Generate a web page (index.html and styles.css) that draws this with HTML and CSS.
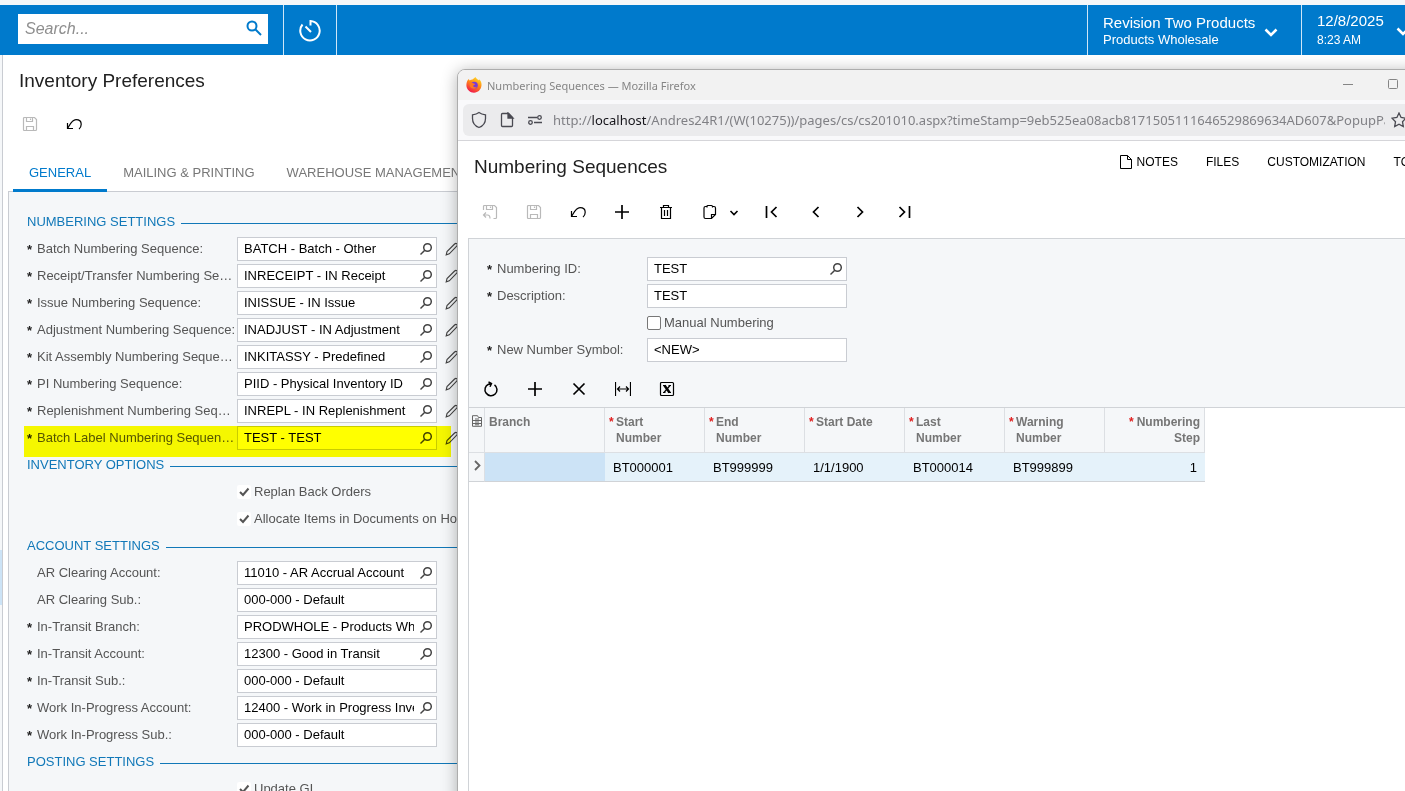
FILE: index.html
```html
<!DOCTYPE html>
<html lang="en">
<head>
    <meta charset="UTF-8">
    <meta name="viewport" content="width=device-width, initial-scale=1.0">
    <title>Inventory Preferences</title>
    <link rel="stylesheet" href="styles.css">
</head>
<body>
    <!-- Shared icons -->
    <svg class="sprite" aria-hidden="true">
        <symbol id="i-lens" viewBox="0 0 14 14"><circle cx="8.5" cy="5.5" r="3.8"/><path d="M5.8 8.2 1.500 12.500"/></symbol>
        <symbol id="i-pencil" viewBox="0 0 14 14"><path d="M1.2 12.8 2 9.6 9.6 2c.8-.8 1.6-.9 2.3-.2s.6 1.5-.2 2.3L4.3 11.8z"/></symbol>
        <symbol id="i-save" viewBox="0 0 16 16"><path d="M2.500 1.500h10l2 2v10q0 1-1 1h-11q-1 0-1-1v-11q0-1 1-1zM4.500 1.500v4h6v-4M8.500 2.500v1.500M4.500 14.500v-4h7v4"/></symbol>
        <symbol id="i-saveback" viewBox="0 0 16 16"><path d="M1.500 6v-3.500q0-1 1-1h10l2 2v10q0 1-1 1h-2M4.500 1.500v4h6v-4M8.500 2.500v1.500M4 8.500 1.500 11 4 13.500M1.500 11h4c1.500 0 2.500 1 2.500 3.500"/></symbol>
        <symbol id="i-undo" viewBox="0 0 16 16"><path d="M1.500 7v5.500H7M1.500 12.500C4 8.500 6 3.700 10 3.700c3.200 0 5.200 2 5.200 4.500 0 2-.8 3.800-2.200 4.800"/></symbol>
        <symbol id="i-plus" viewBox="0 0 16 16"><path d="M8 1v14M1 8h14"/></symbol>
        <symbol id="i-trash" viewBox="0 0 16 16"><path d="M2 3.500h12M5.500 3.500v-2h5v2M3.500 3.500v11h9v-11M6.500 6v6M9.500 6v6"/></symbol>
        <symbol id="i-clip" viewBox="0 0 16 16"><path d="M5 2.500H3.500Q2 2.500 2 4v9q0 1.500 1.500 1.500h6l4-4V4q0-1.500-1.500-1.500h-1.500M5 3.500v-1q0-1 1-1h3.500q1 0 1 1v1M9.500 14.500v-4h4"/></symbol>
        <symbol id="i-down" viewBox="0 0 16 16"><path d="m4.500 7 3.500 3.500L11.500 7"/></symbol>
        <symbol id="i-first" viewBox="0 0 16 16"><path d="M2.500 2v12M12.500 3l-5 5 5 5"/></symbol>
        <symbol id="i-prev" viewBox="0 0 16 16"><path d="m10.500 3-5 5 5 5"/></symbol>
        <symbol id="i-next" viewBox="0 0 16 16"><path d="m5.500 3 5 5-5 5"/></symbol>
        <symbol id="i-last" viewBox="0 0 16 16"><path d="m3.500 3 5 5-5 5M13.500 2v12"/></symbol>
    </svg>

    <header class="topbar">
        <div class="search-box">
            <input type="text" class="search-input" placeholder="Search..." aria-label="Search">
            <button class="search-button" aria-label="Search">
                <svg width="18" height="18" viewBox="0 0 18 18"><circle cx="7" cy="6" r="4.500"/><path d="m10 9 6 6"/></svg>
            </button>
        </div>
        <button class="clock-button" aria-label="Recent">
            <svg width="24" height="24" viewBox="0 0 24 24"><path d="M4.500 6.500A9.700 9.700 0 1 0 12.500 3v4.500M13 14 7.500 8.500"/></svg>
        </button>
        <button class="company">
            <span class="two-lines">
                <span class="line-big">Revision Two Products</span>
                <span class="line-small">Products Wholesale</span>
            </span>
            <svg width="14" height="10" viewBox="0 0 14 10"><path d="m1.500 1.500 5.500 5.500 5.500-5.500"/></svg>
        </button>
        <button class="business-date">
            <span class="two-lines">
                <span class="line-big">12/8/2025</span>
                <span class="line-time">8:23 AM</span>
            </span>
            <svg width="14" height="10" viewBox="0 0 14 10"><path d="m1.500 1.500 5.500 5.500 5.500-5.500"/></svg>
        </button>
    </header>

    <div class="page">
        <nav class="rail"><a href="#" class="rail-active" aria-label="Inventory"></a></nav>
        <main class="content">
            <h1>Inventory Preferences</h1>
            <div class="toolbar">
                <button class="tool disabled" aria-label="Save"><svg><use href="#i-save"/></svg></button>
                <button class="tool" aria-label="Undo"><svg><use href="#i-undo"/></svg></button>
            </div>
            <div class="tabs">
                <button class="tab active">GENERAL</button>
                <button class="tab">MAILING &amp; PRINTING</button>
                <button class="tab">WAREHOUSE MANAGEMENT</button>
            </div>

            <form class="panel">
                <h2>NUMBERING SETTINGS</h2>
                <div class="row required">
                    <label for="batch">Batch Numbering Sequence:</label>
                    <div class="field"><input id="batch" type="text" value="BATCH - Batch - Other"><button type="button" aria-label="Look up"><svg><use href="#i-lens"/></svg></button></div>
                    <button type="button" class="edit" aria-label="Edit"><svg><use href="#i-pencil"/></svg></button>
                </div>
                <div class="row required">
                    <label for="receipt">Receipt/Transfer Numbering Sequence:</label>
                    <div class="field"><input id="receipt" type="text" value="INRECEIPT - IN Receipt"><button type="button" aria-label="Look up"><svg><use href="#i-lens"/></svg></button></div>
                    <button type="button" class="edit" aria-label="Edit"><svg><use href="#i-pencil"/></svg></button>
                </div>
                <div class="row required">
                    <label for="issue">Issue Numbering Sequence:</label>
                    <div class="field"><input id="issue" type="text" value="INISSUE - IN Issue"><button type="button" aria-label="Look up"><svg><use href="#i-lens"/></svg></button></div>
                    <button type="button" class="edit" aria-label="Edit"><svg><use href="#i-pencil"/></svg></button>
                </div>
                <div class="row required">
                    <label for="adjust">Adjustment Numbering Sequence:</label>
                    <div class="field"><input id="adjust" type="text" value="INADJUST - IN Adjustment"><button type="button" aria-label="Look up"><svg><use href="#i-lens"/></svg></button></div>
                    <button type="button" class="edit" aria-label="Edit"><svg><use href="#i-pencil"/></svg></button>
                </div>
                <div class="row required">
                    <label for="kit">Kit Assembly Numbering Sequence:</label>
                    <div class="field"><input id="kit" type="text" value="INKITASSY - Predefined"><button type="button" aria-label="Look up"><svg><use href="#i-lens"/></svg></button></div>
                    <button type="button" class="edit" aria-label="Edit"><svg><use href="#i-pencil"/></svg></button>
                </div>
                <div class="row required">
                    <label for="piid">PI Numbering Sequence:</label>
                    <div class="field"><input id="piid" type="text" value="PIID - Physical Inventory ID"><button type="button" aria-label="Look up"><svg><use href="#i-lens"/></svg></button></div>
                    <button type="button" class="edit" aria-label="Edit"><svg><use href="#i-pencil"/></svg></button>
                </div>
                <div class="row required">
                    <label for="repl">Replenishment Numbering Sequence:</label>
                    <div class="field"><input id="repl" type="text" value="INREPL - IN Replenishment"><button type="button" aria-label="Look up"><svg><use href="#i-lens"/></svg></button></div>
                    <button type="button" class="edit" aria-label="Edit"><svg><use href="#i-pencil"/></svg></button>
                </div>
                <div class="row required marked">
                    <label for="batchlabel">Batch Label Numbering Sequence:</label>
                    <div class="field"><input id="batchlabel" type="text" value="TEST - TEST"><button type="button" aria-label="Look up"><svg><use href="#i-lens"/></svg></button></div>
                    <button type="button" class="edit" aria-label="Edit"><svg><use href="#i-pencil"/></svg></button>
                </div>

                <h2>INVENTORY OPTIONS</h2>
                <div class="row check-row"><label><input type="checkbox" checked>Replan Back Orders</label></div>
                <div class="row check-row"><label><input type="checkbox" checked>Allocate Items in Documents on Hold</label></div>

                <h2>ACCOUNT SETTINGS</h2>
                <div class="row">
                    <label for="aracct">AR Clearing Account:</label>
                    <div class="field"><input id="aracct" type="text" value="11010 - AR Accrual Account"><button type="button" aria-label="Look up"><svg><use href="#i-lens"/></svg></button></div>
                </div>
                <div class="row">
                    <label for="arsub">AR Clearing Sub.:</label>
                    <div class="field"><input id="arsub" type="text" value="000-000 - Default"></div>
                </div>
                <div class="row required">
                    <label for="itbranch">In-Transit Branch:</label>
                    <div class="field"><input id="itbranch" type="text" value="PRODWHOLE - Products Wholesale"><button type="button" aria-label="Look up"><svg><use href="#i-lens"/></svg></button></div>
                </div>
                <div class="row required">
                    <label for="itacct">In-Transit Account:</label>
                    <div class="field"><input id="itacct" type="text" value="12300 - Good in Transit"><button type="button" aria-label="Look up"><svg><use href="#i-lens"/></svg></button></div>
                </div>
                <div class="row required">
                    <label for="itsub">In-Transit Sub.:</label>
                    <div class="field"><input id="itsub" type="text" value="000-000 - Default"></div>
                </div>
                <div class="row required">
                    <label for="wipacct">Work In-Progress Account:</label>
                    <div class="field"><input id="wipacct" type="text" value="12400 - Work in Progress Inventory"><button type="button" aria-label="Look up"><svg><use href="#i-lens"/></svg></button></div>
                </div>
                <div class="row required">
                    <label for="wipsub">Work In-Progress Sub.:</label>
                    <div class="field"><input id="wipsub" type="text" value="000-000 - Default"></div>
                </div>

                <h2>POSTING SETTINGS</h2>
                <div class="row check-row"><label><input type="checkbox" checked>Update GL</label></div>
            </form>
        </main>
    </div>

    <!-- Popup browser window -->
    <section class="popup">
        <div class="titlebar">
            <svg class="firefox" width="16" height="16" viewBox="0 0 16 16">
                <defs>
                    <linearGradient id="fox" x1="0.8" y1="0" x2="0.3" y2="1"><stop offset="0" stop-color="#ffe226"/><stop offset="0.45" stop-color="#ff8a16"/><stop offset="1" stop-color="#f0134d"/></linearGradient>
                </defs>
                <path d="M1.500 3.500 2.800 2l.8 1.500C4.500 2.800 5.500 2.500 6.500 2.500L9.500 0c.5 1.500 2 2 3 3.200.5-.3.500-.9.500-.9C15 4 15.800 6 15.500 8.600 15 12.800 12 15.700 8 15.700S.5 12.500.4 8.500C.4 6.500.8 4.800 1.500 3.500z" fill="url(#fox)"/>
                <circle cx="8.300" cy="8.300" r="3.500" fill="#7a3bd6"/>
                <path d="M3.500 6.500c1.500-1.300 3-.9 4.200.1 1 .2 1.600.5 1.300 1-.8.8-1.800.7-1.800 1.500 0 1.200 2.300 1.700 3.600.3-.4 2.600-4.800 3.300-6.400.6-.6-1-1-2.300-.9-3.500z" fill="#ff7a20"/>
            </svg>
            <span class="window-title">Numbering Sequences — Mozilla Firefox</span>
            <div class="window-buttons">
                <button aria-label="Minimize"><svg width="12" height="12" viewBox="0 0 12 12"><path d="M1 5.500h10"/></svg></button>
                <button aria-label="Maximize"><svg width="12" height="12" viewBox="0 0 12 12"><rect x="1.500" y="0.500" width="9" height="9" rx="1"/></svg></button>
                <button aria-label="Close"><svg width="12" height="12" viewBox="0 0 12 12"><path d="m1 1 10 10M11 1 1 11"/></svg></button>
            </div>
        </div>
        <div class="navbar">
            <div class="urlbar">
                <svg width="16" height="18" viewBox="0 0 16 18"><path d="M8 1.500C6 3 4 3.500 1.500 3.800v3.700C1.500 12 4 15 8 16.500c4-1.500 6.500-4.500 6.500-9V3.800C12 3.500 10 3 8 1.500z"/></svg>
                <svg width="16" height="16" viewBox="0 0 16 16"><path d="M3.500 1.500h6l4 4v8q0 1-1 1h-9q-1 0-1-1v-11q0-1 1-1z"/><path d="M9 1v5h5z" fill="#4a4a52"/></svg>
                <svg width="16" height="16" viewBox="0 0 16 16"><path d="M1 5.500h9M7 10.500h8"/><circle cx="12.500" cy="5.500" r="1.800"/><circle cx="3.500" cy="10.500" r="1.800"/></svg>
                <div class="url">http://<b>localhost</b>/Andres24R1/(W(10275))/pages/cs/cs201010.aspx?timeStamp=9eb525ea08acb8171505111646529869634AD607&amp;PopupPanel=On</div>
                <button aria-label="Bookmark"><svg width="16" height="16" viewBox="0 0 16 16"><path d="m8 1 2.100 4.500 4.900.7-3.500 3.500.8 4.900L8 12.300l-4.300 2.300.8-4.900L1 6.200l4.900-.7z"/></svg></button>
            </div>
        </div>

        <div class="popup-page">
            <div class="popup-head">
                <h1>Numbering Sequences</h1>
                <nav class="popup-links">
                    <a href="#"><svg width="14" height="14" viewBox="0 0 14 14"><path d="M1.500.5h7l4 4v9h-11zM8.500.5v4h4"/></svg>NOTES</a>
                    <a href="#">FILES</a>
                    <a href="#">CUSTOMIZATION</a>
                    <a href="#">TOOLS</a>
                </nav>
            </div>
            <div class="toolbar">
                <button class="tool disabled" aria-label="Save and close"><svg><use href="#i-saveback"/></svg></button>
                <button class="tool disabled" aria-label="Save"><svg><use href="#i-save"/></svg></button>
                <button class="tool" aria-label="Undo"><svg><use href="#i-undo"/></svg></button>
                <button class="tool bold" aria-label="Add"><svg><use href="#i-plus"/></svg></button>
                <button class="tool" aria-label="Delete"><svg><use href="#i-trash"/></svg></button>
                <button class="tool" aria-label="Clipboard"><svg><use href="#i-clip"/></svg></button>
                <button class="tool tool-caret" aria-label="Clipboard menu"><svg><use href="#i-down"/></svg></button>
                <button class="tool bold" aria-label="First"><svg><use href="#i-first"/></svg></button>
                <button class="tool bold" aria-label="Previous"><svg><use href="#i-prev"/></svg></button>
                <button class="tool bold" aria-label="Next"><svg><use href="#i-next"/></svg></button>
                <button class="tool bold" aria-label="Last"><svg><use href="#i-last"/></svg></button>
            </div>

            <div class="detail">
                <form class="detail-form">
                    <div class="row required">
                        <label for="numid">Numbering ID:</label>
                        <div class="field"><input id="numid" type="text" value="TEST"><button type="button" aria-label="Look up"><svg><use href="#i-lens"/></svg></button></div>
                    </div>
                    <div class="row required">
                        <label for="descr">Description:</label>
                        <div class="field"><input id="descr" type="text" value="TEST"></div>
                    </div>
                    <div class="row check-row"><label><input type="checkbox">Manual Numbering</label></div>
                    <div class="row required">
                        <label for="symbol">New Number Symbol:</label>
                        <div class="field"><input id="symbol" type="text" value="&lt;NEW&gt;"></div>
                    </div>
                </form>
                <div class="toolbar grid-toolbar">
                    <button class="tool" aria-label="Refresh"><svg viewBox="0 0 16 16"><path d="M11.500 3.800A6 6 0 1 1 5.500 3.200L8.300 2.600M5.500.8 8.500 2.500 7 5.800" stroke-width="1.500"/></svg></button>
                    <button class="tool bold" aria-label="Add row"><svg><use href="#i-plus"/></svg></button>
                    <button class="tool bold" aria-label="Delete row"><svg viewBox="0 0 16 16"><path d="m2.500 2.500 11 11M13.500 2.500l-11 11"/></svg></button>
                    <button class="tool" aria-label="Fit to screen"><svg viewBox="0 0 16 16"><path d="M.5 1v14M15.500 1v14M3 8h10M5 5.500 2.500 8 5 10.500M11 5.500 13.500 8 11 10.500"/></svg></button>
                    <button class="tool" aria-label="Export to Excel"><svg viewBox="0 0 16 16"><rect x="1.500" y="1.500" width="13" height="13" rx="1"/><path d="M4 4.500h3M9.500 4.500h2.500M4 11.500h2.500M9 11.500h3M11 4.500l-6 7"/><path d="m5.500 4.500 5 7" stroke-width="2.500"/></svg></button>
                </div>
                <table>
                    <colgroup>
                        <col class="c-sel"><col class="c-branch"><col><col><col><col><col><col>
                    </colgroup>
                    <thead>
                        <tr>
                            <th class="sel"><svg width="12" height="12" viewBox="0 0 12 12"><path d="M1.500 3V.7h5l1 1.800h3V11.300h-9V3M1.500 5.500h9M1.500 8.500h9M4 4h4M4 7h4M4 9.800h4"/></svg></th>
                            <th>Branch</th>
                            <th class="req"><span>Start Number</span></th>
                            <th class="req"><span>End Number</span></th>
                            <th class="req"><span>Start Date</span></th>
                            <th class="req"><span>Last Number</span></th>
                            <th class="req"><span>Warning Number</span></th>
                            <th class="req num"><span>Numbering Step</span></th>
                        </tr>
                    </thead>
                    <tbody>
                        <tr>
                            <td class="sel"><svg width="12" height="12" viewBox="0 0 12 12"><path d="m4 1 4.500 4.500L4 10" stroke-width="1.800"/></svg></td>
                            <td class="current"></td>
                            <td>BT000001</td>
                            <td>BT999999</td>
                            <td>1/1/1900</td>
                            <td>BT000014</td>
                            <td>BT999899</td>
                            <td class="num">1</td>
                        </tr>
                    </tbody>
                </table>
            </div>
        </div>
    </section>
</body>
</html>
```
FILE: styles.css
```css
* {
    box-sizing: border-box;
}

html, body {
    margin: 0;
    padding: 0;
    height: 100%;
    overflow: hidden;
}

body {
    display: flex;
    flex-direction: column;
    padding-top: 5px;
    position: relative;
    background: #f5f7f9;
    font-family: "Liberation Sans", Arial, sans-serif;
    font-size: 13px;
    color: #000;
}

button, input {
    font: inherit;
    color: inherit;
    border: none;
    background: none;
    margin: 0;
    padding: 0;
}

button {
    cursor: pointer;
}

svg {
    fill: none;
    stroke: currentColor;
    display: block;
    flex: none;
}

.sprite {
    display: none;
}

h1 {
    margin: 0;
    font-size: 19px;
    line-height: 24px;
    font-weight: normal;
    color: #212121;
}

/* Top bar */
.topbar {
    flex: none;
    display: flex;
    align-items: stretch;
    height: 50px;
    background: #007acc;
    color: #fff;
    padding-left: 18px;
}

.search-box {
    display: flex;
    align-items: center;
    width: 250px;
    height: 30px;
    margin: 9px 15px 0 0;
    padding: 0 5px 0 7px;
    background: #fff;
}

.search-input {
    flex: 1;
    min-width: 0;
    font-size: 16px;
    outline: none;
    color: #333;
}

.search-input::placeholder {
    color: #8e8e8e;
    font-style: italic;
    opacity: 1;
}

.search-button {
    color: #007acc;
}

.search-button svg {
    stroke-width: 2;
}

.clock-button {
    width: 54px;
    border-left: 1px solid #cfe6f7;
    border-right: 1px solid #cfe6f7;
    display: flex;
    align-items: center;
    justify-content: center;
}

.clock-button svg {
    stroke-width: 2;
}

.company, .business-date {
    display: flex;
    align-items: center;
    border-left: 1px solid #cfe6f7;
    padding-left: 15px;
    text-align: left;
}

.company {
    width: 214px;
    gap: 9px;
    margin-left: auto;
    padding-top: 2px;
}

.business-date {
    width: 104px;
    gap: 12px;
    overflow: hidden;
}

.company svg, .business-date svg {
    stroke-width: 2.5;
    margin-top: 4px;
}

.two-lines {
    display: flex;
    flex-direction: column;
}

.line-big {
    font-size: 15px;
    line-height: 18px;
}

.line-small {
    line-height: 16px;
}

.line-time {
    font-size: 12px;
    line-height: 18px;
}

.business-date .line-big {
    line-height: 20px;
}

/* Page under the popup */
.page {
    flex: 1;
    min-height: 0;
    display: flex;
    background: #fff;
}

.rail {
    flex: none;
    width: 3px;
    padding-top: 495px;
    background: #f5f7f9;
    border-right: 1px solid #c9ccd2;
}

.rail-active {
    display: block;
    height: 55px;
    background: #cce3f6;
}

.content {
    flex: 1;
    min-width: 0;
    display: flex;
    flex-direction: column;
    padding: 14px 0 0 5px;
}

.content > h1 {
    padding-left: 11px;
}

.toolbar {
    display: flex;
    align-items: center;
}

.content > .toolbar {
    height: 36px;
    margin-top: 13px;
}

.tool {
    width: 44px;
    height: 30px;
    display: flex;
    align-items: center;
    justify-content: center;
}

.tool svg {
    width: 16px;
    height: 16px;
    stroke-width: 1.2;
}

.tool.bold svg {
    stroke-width: 1.7;
}

.tool.disabled {
    color: #b9b9b9;
}

.tool-caret {
    width: 4px;
    margin-right: 14px;
}

.tool-caret svg {
    stroke-width: 1.6;
}

.tabs {
    flex: none;
    display: flex;
    height: 50px;
    padding-left: 5px;
    align-items: flex-end;
    position: relative;
    z-index: 1;
    margin-bottom: -1px;
}

.tab {
    flex: none;
    height: 39px;
    padding: 2px 16px 0;
    border-bottom: 3px solid transparent;
    color: #777;
}

.tab.active {
    color: #007acc;
    border-bottom-color: #007acc;
}

.panel {
    flex: 1;
    min-height: 0;
    padding: 17px 0 0 18px;
    background: #f5f7f9;
    border: 1px solid #c9ccd2;
    border-width: 1px 0 0 1px;
    overflow: hidden;
}

h2 {
    display: flex;
    align-items: center;
    gap: 6px;
    height: 27px;
    margin: 0;
    padding-bottom: 2px;
    font-size: 13px;
    font-weight: normal;
    color: #1178b8;
}

h2::after {
    content: '';
    flex: 1;
    height: 1px;
    margin-top: 4px;
    background: #1178b8;
}

.row {
    position: relative;
    display: flex;
    align-items: center;
    height: 27px;
    padding-left: 10px;
    padding-bottom: 2px;
    color: #555;
}

.row > label {
    flex: none;
    width: 198px;
    margin-right: 2px;
    overflow: hidden;
    white-space: nowrap;
    text-overflow: ellipsis;
}

.row.required::before {
    content: '*';
    width: 10px;
    margin-left: -10px;
    font-weight: bold;
    line-height: 14px;
    padding-top: 3px;
    color: #222;
}

.field {
    flex: none;
    display: flex;
    align-items: center;
    width: 200px;
    height: 24px;
    padding-left: 6px;
    background: #fff;
    border: 1px solid #c9ccd2;
    color: #000;
}

.field input {
    flex: 1;
    min-width: 0;
    height: 100%;
    outline: none;
}

.field button {
    padding: 0 3px 0 5px;
    color: #444;
}

.field svg {
    width: 14px;
    height: 14px;
    stroke-width: 1.5;
}

.edit {
    margin-left: 8px;
    color: #444;
}

.edit svg {
    width: 14px;
    height: 14px;
    stroke-width: 1.1;
}

.check-row {
    padding-left: 210px;
}

.check-row > label {
    display: flex;
    align-items: center;
    gap: 3px;
    width: auto;
}

input[type="checkbox"] {
    appearance: none;
    width: 14px;
    height: 14px;
    border-radius: 2px;
    background: #fff;
}

.panel input[type="checkbox"]:checked {
    background: #fff url("data:image/svg+xml,%3Csvg xmlns='http://www.w3.org/2000/svg' viewBox='0 0 14 14'%3E%3Cpath d='M3 7l3 3 5.500-6.500' fill='none' stroke='%23555' stroke-width='2'/%3E%3C/svg%3E");
}

.detail-form input[type="checkbox"] {
    border: 1px solid #777;
}

/* Yellow marker over the row */
.marked::after {
    content: '';
    position: absolute;
    left: -3px;
    top: 1px;
    width: 427px;
    height: 31px;
    background: #ff0;
    mix-blend-mode: multiply;
    pointer-events: none;
}

/* Popup window */
.popup {
    position: absolute;
    left: 457px;
    right: -56px;
    top: 69px;
    bottom: -20px;
    z-index: 5;
    display: flex;
    flex-direction: column;
    background: #fff;
    border: 1px solid #adadad;
    border-radius: 8px 0 0 0;
    box-shadow: 0 2px 16px rgba(0, 0, 0, 0.3);
    overflow: hidden;
}

.titlebar {
    flex: none;
    display: flex;
    align-items: center;
    height: 30px;
    padding-left: 8px;
    background: #f2f2f2;
    color: #858585;
    font-family: "Noto Sans", "Open Sans", sans-serif;
    font-size: 11px;
}

.firefox {
    margin-right: 5px;
    stroke: none;
}

.window-buttons {
    display: flex;
    margin-left: auto;
}

.window-buttons button {
    width: 45px;
    height: 30px;
    display: flex;
    align-items: center;
    justify-content: center;
}

.navbar {
    flex: none;
    height: 41px;
    padding: 4px 5px;
    background: #f9f9fb;
    border-bottom: 1px solid #d5d5d9;
}

.urlbar {
    display: flex;
    align-items: center;
    gap: 12px;
    height: 32px;
    padding: 0 48px 0 8px;
    border-radius: 6px;
    background: #ebebed;
    color: #4a4a52;
    font-family: "Noto Sans", "Open Sans", sans-serif;
    font-size: 13px;
}

.urlbar svg {
    stroke-width: 1.3;
}

.url {
    flex: 1;
    min-width: 0;
    margin: 0 -6px 0 -2px;
    overflow: hidden;
    white-space: nowrap;
    color: #808085;
}

.url b {
    font-weight: normal;
    color: #15141a;
}

.popup-page {
    flex: 1;
    min-height: 0;
    display: flex;
    flex-direction: column;
    padding-left: 10px;
}

.popup-head {
    display: flex;
    align-items: flex-start;
    padding: 14px 26px 0 6px;
}

.popup-links {
    display: flex;
    gap: 28px;
    margin-left: auto;
    font-size: 12px;
    line-height: 14px;
}

.popup-links a {
    display: flex;
    align-items: center;
    gap: 4px;
    color: #000;
    text-decoration: none;
}

.popup-page > .toolbar {
    height: 59px;
    padding-top: 6px;
}

.detail {
    flex: 1;
    border: 1px solid #d0d3d7;
    border-width: 1px 0 0 1px;
}

.detail-form {
    padding: 17px 0 0 18px;
    background: #f5f7f9;
}

.detail-form .row > label {
    width: 148px;
}

.detail-form .check-row {
    padding-left: 160px;
}

.grid-toolbar {
    height: 44px;
    padding-top: 6px;
    background: #f5f7f9;
    border-bottom: 1px solid #d0d3d7;
}

table {
    width: 736px;
    table-layout: fixed;
    border-collapse: separate;
    border-spacing: 0;
}

col {
    width: 100px;
}

.c-sel {
    width: 16px;
}

.c-branch {
    width: 120px;
}

th {
    height: 45px;
    padding: 6px 4px;
    vertical-align: top;
    text-align: left;
    font-size: 12px;
    line-height: 16px;
    color: #757575;
    background: #f5f7f9;
    border-right: 1px solid #dcdfe3;
    border-bottom: 1px solid #dcdfe3;
}

th.sel, td.sel {
    padding: 7px 0 0 2px;
    vertical-align: top;
    color: #666;
    background: #f5f7f9;
    border-right: 1px solid #dcdfe3;
}

.req span {
    display: inline-block;
    width: 60px;
    vertical-align: top;
}

.req::before {
    content: '*';
    display: inline-block;
    width: 7px;
    text-align: left;
    color: #e02020;
}

.req.num {
    white-space: nowrap;
}

.req.num span {
    width: 64px;
    white-space: normal;
}

td {
    height: 29px;
    padding: 1px 8px 0;
    background: #e5f2fa;
    border-bottom: 1px solid #d0d3d7;
}

td.current {
    background: #cce3f6;
}

.num {
    text-align: right;
}
```
